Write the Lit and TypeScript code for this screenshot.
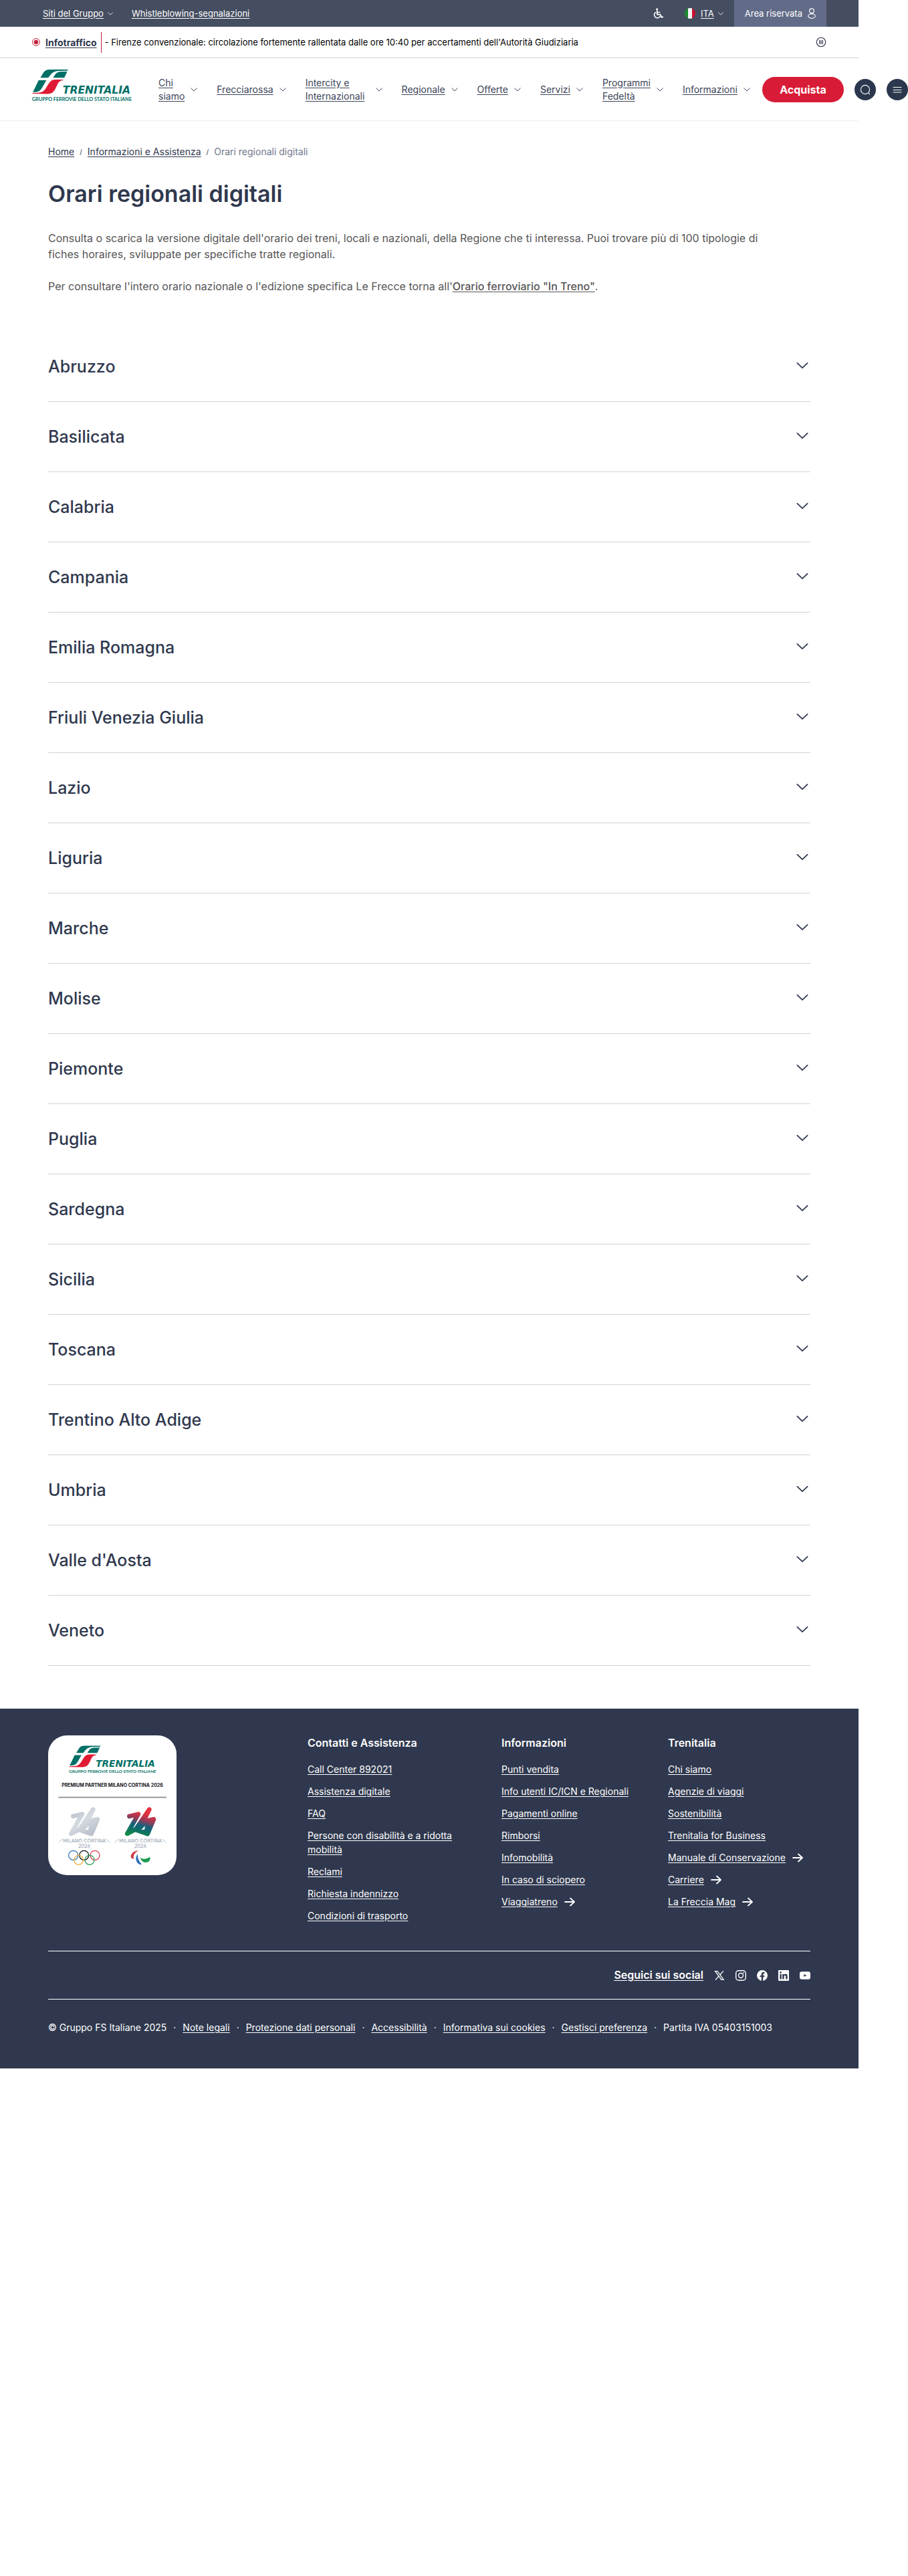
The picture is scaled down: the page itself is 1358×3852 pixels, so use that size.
import { LitElement, html, svg, css, nothing } from "lit";
import { customElement, state } from "lit/decorators.js";

type Item = { text: string; arrow?: boolean };

const NAV: string[] = [
  "Chi siamo",
  "Frecciarossa",
  "Intercity e Internazionali",
  "Regionale",
  "Offerte",
  "Servizi",
  "Programmi Fedeltà",
  "Informazioni",
];

const REGIONS: string[] = [
  "Abruzzo", "Basilicata", "Calabria", "Campania", "Emilia Romagna",
  "Friuli Venezia Giulia", "Lazio", "Liguria", "Marche", "Molise",
  "Piemonte", "Puglia", "Sardegna", "Sicilia", "Toscana",
  "Trentino Alto Adige", "Umbria", "Valle d'Aosta", "Veneto",
];

const COLUMNS: { title: string; items: Item[] }[] = [
  {
    title: "Contatti e Assistenza",
    items: [
      { text: "Call Center 892021" },
      { text: "Assistenza digitale" },
      { text: "FAQ" },
      { text: "Persone con disabilità e a ridotta mobilità" },
      { text: "Reclami" },
      { text: "Richiesta indennizzo" },
      { text: "Condizioni di trasporto" },
    ],
  },
  {
    title: "Informazioni",
    items: [
      { text: "Punti vendita" },
      { text: "Info utenti IC/ICN e Regionali" },
      { text: "Pagamenti online" },
      { text: "Rimborsi" },
      { text: "Infomobilità" },
      { text: "In caso di sciopero" },
      { text: "Viaggiatreno", arrow: true },
    ],
  },
  {
    title: "Trenitalia",
    items: [
      { text: "Chi siamo" },
      { text: "Agenzie di viaggi" },
      { text: "Sostenibilità" },
      { text: "Trenitalia for Business" },
      { text: "Manuale di Conservazione", arrow: true },
      { text: "Carriere", arrow: true },
      { text: "La Freccia Mag", arrow: true },
    ],
  },
];

const LEGAL: string[] = [
  "Note legali",
  "Protezione dati personali",
  "Accessibilità",
  "Informativa sui cookies",
  "Gestisci preferenza",
];

const chevron = (cls: string) => html`
  <svg class=${cls} viewBox="0 0 20 12" aria-hidden="true">
    <path d="M1.5 2 L10 10 L18.5 2" fill="none" stroke="currentColor" stroke-linecap="round" stroke-linejoin="round" />
  </svg>`;

const arrow = html`
  <svg class="arrow" viewBox="0 0 16 14" aria-hidden="true">
    <path d="M1 7 H15 M9 1.5 L15 7 L9 12.5" fill="none" stroke="currentColor" stroke-width="1.8" stroke-linecap="round" stroke-linejoin="round" />
  </svg>`;

/* Brand mark with wordmark, drawn on a 449 x 148 field. */
const brand = () => svg`
  <g transform="translate(-144 -306)">
    <path fill="#006f66" d="M181 346 L194 324 Q203 309 222 309 L306 309 L303 314 L262 315 Q240 317 229 330 L216 346 Z" />
    <path fill="#006f66" d="M238 346 L246 334 Q254 320 270 319 L302 318 L289 346 Z" />
    <path fill="#006f66" d="M173 357 L208 357 L188 392 Q178 410 160 411 L147 411 Z" />
    <path fill="#e01a33" d="M144 418 L146 415 L172 414 Q194 412 204 396 L220 370 Q230 354 249 354 L284 354 L283 357 Q266 358 259 374 L248 397 Q238 419 212 419 Z" />
    <text x="282" y="418" font-family="DejaVu Sans, Liberation Sans, sans-serif" font-size="47" font-weight="bold" font-style="italic" fill="#006f66">TRENITALIA</text>
    <text x="143" y="450" font-family="Lato, Liberation Sans, sans-serif" font-size="22" font-weight="bold" fill="#006f66">GRUPPO FERROVIE DELLO STATO ITALIANE</text>
  </g>`;

const games = (paint: string) => svg`
  <g fill=${paint} stroke=${paint} stroke-width="20" stroke-linecap="round" stroke-linejoin="round">
    <path fill="none" d="M322 63 L363 53 L313 141 L352 120 L412 32 L386 86" />
    <path d="M352 124 L386 86 L432 76 L404 142 Z" />
  </g>
  <path d="M376 124 L392 106 L391 122 Z" fill="#fff" />
  <text x="372" y="180" text-anchor="middle" font-family="DejaVu Sans, Liberation Sans, sans-serif" font-size="22" fill="#8b9aa8">MILANO CORTINA</text>
  <path d="M257 180 L274 165 M470 165 L487 180" stroke="#8b9aa8" stroke-width="2" />
  <text x="372" y="204" text-anchor="middle" font-family="Lato, Liberation Sans, sans-serif" font-size="23" fill="#8b9aa8">2026</text>`;

const partner = html`
  <svg class="partner" viewBox="96 165 576 627" role="img" aria-label="Trenitalia, Premium Partner Milano Cortina 2026">
    <defs>
      <linearGradient id="silver" gradientUnits="userSpaceOnUse" x1="320" y1="20" x2="400" y2="150">
        <stop offset="0" stop-color="#b4bcc7" /><stop offset="0.5" stop-color="#d6dae1" /><stop offset="1" stop-color="#b9c0ca" />
      </linearGradient>
      <linearGradient id="flame" gradientUnits="userSpaceOnUse" x1="385" y1="20" x2="350" y2="150">
        <stop offset="0.2" stop-color="#e2323f" /><stop offset="0.42" stop-color="#9c3a55" /><stop offset="0.62" stop-color="#185f7c" /><stop offset="0.75" stop-color="#0e6a6b" /><stop offset="1" stop-color="#128a45" />
      </linearGradient>
    </defs>
    <g transform="translate(190 209) scale(0.87)">${brand()}</g>
    <text x="384" y="396" text-anchor="middle" font-family="Inter, Liberation Sans, sans-serif" font-size="21" font-weight="700" fill="#16161c">PREMIUM PARTNER MILANO CORTINA 2026</text>
    <path d="M142 443 H627" stroke="#8b8d92" stroke-width="5" />
    <g transform="translate(-114 465)">${games("url(#silver)")}</g>
    <g transform="translate(138 465)">${games("url(#flame)")}</g>
    <g fill="none" stroke-width="4">
      <circle cx="209" cy="703" r="21" stroke="#2b74b8" />
      <circle cx="257" cy="703" r="21" stroke="#111" />
      <circle cx="306" cy="703" r="21" stroke="#d93a4b" />
      <circle cx="233" cy="724" r="21" stroke="#efae3a" />
      <circle cx="282" cy="724" r="21" stroke="#2a9a56" />
    </g>
    <path fill="#cf3540" d="M502 682 Q470 684 467 709 Q468 718 480 719 Q474 696 502 682 Z" />
    <path fill="#2f6fb5" d="M497 697 Q484 716 495 735 Q504 748 516 743 Q498 728 497 697 Z" />
    <path fill="#1f9a52" d="M508 713 Q528 727 552 710 Q558 722 545 733 Q520 742 508 713 Z" />
  </svg>`;

@customElement("app-root")
export class AppRoot extends LitElement {
  @state() private open = -1;

  static styles = css`
    :host {
      display: block;
      font-family: Inter, "Liberation Sans", sans-serif;
      color: #2f384e;
      --gutter: 74px;
    }
    * { box-sizing: border-box; }
    a { color: inherit; text-decoration: underline; text-underline-offset: 2px; }
    button { font: inherit; color: inherit; background: none; border: 0; padding: 0; cursor: pointer; }
    ul { list-style: none; margin: 0; padding: 0; }
    h1, h2, h3, p { margin: 0; }
    svg { display: block; flex: none; }
    .page { margin-right: var(--gutter); }

    .topbar {
      display: flex; align-items: center; justify-content: space-between;
      height: 40px; padding: 0 48px 0 64px;
      background: #454d60; color: #fff; font-size: 13px; line-height: 20px;
    }
    .group { display: flex; align-items: center; }
    .sites { gap: 28px; }
    .drop { display: flex; align-items: center; gap: 6px; }
    .tiny { width: 8px; height: 5px; stroke-width: 2px; }
    .tools { height: 100%; }
    .wheel { width: 16px; height: 16px; margin-right: 32px; }
    .flag { width: 16px; height: 16px; margin-right: 8px; }
    .account {
      display: flex; align-items: center; gap: 8px; height: 100%;
      margin-left: 16px; padding: 0 16px; background: #626b88; color: #fff; text-decoration: none;
    }
    .person { width: 12px; height: 16px; }

    .info {
      display: flex; align-items: center; height: 47px; padding: 0 48px;
      border-bottom: 1px solid #d3d3d3; font-size: 14px;
    }
    .live { width: 12px; height: 12px; margin-right: 8px; }
    .info strong { font-weight: 700; }
    .news {
      display: flex; align-items: center; height: 31px; margin-left: 6px; padding-left: 5px;
      border-left: 1px solid #c01f3c; color: #000; font-size: 13px;
    }
    .pause { margin-left: auto; }
    .pause svg { width: 16px; height: 16px; }

    .header { border-bottom: 1px solid #efefef; }
    .bar {
      display: flex; align-items: center; height: 93px; padding-left: 48px;
      margin-right: calc(-1 * var(--gutter));
    }
    .logo { align-self: flex-start; padding-top: 16px; }
    .logo svg { width: 149px; height: 49px; overflow: visible; }
    .menu {
      display: flex; flex: 1; align-items: center; justify-content: space-between;
      padding: 0 18px 0 40px; font-size: 14px; line-height: 20px; color: #3b4458;
    }
    .entry { display: flex; align-items: center; gap: 9px; }
    .entry a { width: min-content; }
    .entry .pair { width: auto; max-width: 96px; }
    .small { width: 10px; height: 6px; stroke-width: 2px; }
    .buy {
      display: flex; align-items: center; justify-content: center; width: 122px; height: 38px;
      border-radius: 19px; background: #d81b36; color: #fff; font-size: 16px; font-weight: 700;
    }
    .round {
      display: flex; align-items: center; justify-content: center; width: 32px; height: 32px;
      margin-left: 16px; border-radius: 50%; background: #2b374d; color: #fff;
    }
    .round svg { width: 16px; height: 16px; }

    .content { padding: 36px 72px 64px; }
    .crumbs { display: flex; align-items: center; gap: 8px; font-size: 14px; line-height: 20px; }
    .slash { font-size: 10px; }
    .here { color: #6f768c; }
    h1 { margin-top: 31px; font-size: 34px; line-height: 44px; font-weight: 600; }
    .intro { max-width: 1104px; margin-top: 32px; font-size: 16px; line-height: 24px; color: #555; }
    .intro p + p { margin-top: 24px; }
    .intro strong { font-weight: 500; }
    .regions { margin-top: 56px; }
    .region { border-bottom: 1px solid #d3d3d3; }
    .region h2 { font-size: 25px; line-height: 32px; font-weight: 500; }
    .region button {
      display: flex; align-items: center; justify-content: space-between;
      width: 100%; padding: 36px 3px 36px 0; text-align: left;
    }
    .big { width: 18px; height: 11px; margin-bottom: 4px; stroke-width: 2px; }
    .panel { padding-bottom: 24px; font-size: 16px; line-height: 24px; color: #555; }

    .footer { padding: 40px 72px 51px; background: #2f384e; color: #fff; font-size: 14px; line-height: 21px; }
    .top { display: grid; grid-template-columns: 388px 290px 249px 1fr; padding-bottom: 42px; }
    .card { width: 192px; height: 209px; border-radius: 28px; background: #fff; }
    .partner { width: 192px; height: 209px; }
    .col h2 { font-size: 16px; line-height: 22px; font-weight: 600; }
    .col ul { display: grid; gap: 12px; margin-top: 18px; }
    .col li { display: flex; align-items: center; gap: 10px; max-width: 240px; }
    .arrow { width: 16px; height: 14px; }
    .social {
      display: flex; align-items: center; justify-content: flex-end; gap: 16px; height: 73px;
      border-top: 1px solid #fff; border-bottom: 1px solid #fff; font-size: 16px; font-weight: 600;
    }
    .social svg { width: 16px; height: 16px; }
    .legal { display: flex; flex-wrap: wrap; gap: 10px; margin-top: 31px; }
  `;

  private toggle(i: number) {
    this.open = this.open === i ? -1 : i;
  }

  render() {
    return html`
      <div class="page">
        <div class="topbar">
          <div class="group sites">
            <a class="drop" href="#">Siti del Gruppo ${chevron("tiny")}</a>
            <a href="#">Whistleblowing-segnalazioni</a>
          </div>
          <div class="group tools">
            <a href="#" aria-label="Accessibilità">
              <svg class="wheel" viewBox="0 0 16 16" fill="none" stroke="#fff" stroke-linecap="round" stroke-linejoin="round">
                <circle cx="6.6" cy="1.7" r="1.5" fill="#fff" stroke="none" />
                <path d="M6.8 4 V9.6 H11.4 L13.6 14 L15.2 13.3" stroke-width="1.9" />
                <path d="M7 6.4 H11" stroke-width="1.4" />
                <path d="M4.2 6.6 A4.6 4.6 0 1 0 11 12.6" stroke-width="1.6" />
              </svg>
            </a>
            <svg class="flag" viewBox="0 0 16 16" aria-hidden="true">
              <clipPath id="disc"><circle cx="8" cy="8" r="8" /></clipPath>
              <g clip-path="url(#disc)">
                <path fill="#1b8a2c" d="M0 0h5v16H0z" /><path fill="#f4f4f4" d="M5 0h6v16H5z" /><path fill="#c8102e" d="M11 0h5v16h-5z" />
              </g>
            </svg>
            <a class="drop" href="#">ITA ${chevron("tiny")}</a>
            <a class="account" href="#">Area riservata
              <svg class="person" viewBox="0 0 12 16" fill="none" stroke="#fff" stroke-width="1.2" aria-hidden="true">
                <circle cx="6" cy="4.2" r="3.4" /><ellipse cx="6" cy="12" rx="5.3" ry="3.3" />
              </svg>
            </a>
          </div>
        </div>

        <div class="info">
          <svg class="live" viewBox="0 0 12 12" aria-hidden="true">
            <circle cx="6" cy="6" r="5.4" fill="none" stroke="#c01f3c" /><circle cx="6" cy="6" r="3.2" fill="#c01f3c" />
          </svg>
          <a href="#"><strong>Infotraffico</strong></a>
          <span class="news">- Firenze convenzionale: circolazione fortemente rallentata dalle ore 10:40 per accertamenti dell'Autorità Giudiziaria</span>
          <button class="pause" aria-label="Pausa">
            <svg viewBox="0 0 16 16" fill="none" stroke="#2f384e">
              <circle cx="8" cy="8" r="6.7" stroke-width="1.1" /><rect x="5.5" y="5.4" width="1.8" height="5.2" rx="0.5" stroke-width="0.9" /><rect x="8.8" y="5.4" width="1.8" height="5.2" rx="0.5" stroke-width="0.9" />
            </svg>
          </button>
        </div>

        <header class="header">
          <div class="bar">
            <a class="logo" href="#" aria-label="Trenitalia">
              <svg viewBox="0 0 449 148">${brand()}</svg>
            </a>
            <nav class="menu">
              ${NAV.map((n) => html`<div class="entry"><a class=${n.startsWith("Intercity") ? "pair" : ""} href="#">${n}</a>${chevron("small")}</div>`)}
            </nav>
            <button class="buy">Acquista</button>
            <button class="round" aria-label="Cerca">
              <svg viewBox="0 0 16 16" fill="none" stroke="currentColor" stroke-width="1.1" stroke-linecap="round">
                <circle cx="8" cy="8" r="6.6" /><path d="M13 13 L14.6 14.8" />
              </svg>
            </button>
            <button class="round" aria-label="Menu">
              <svg viewBox="0 0 16 16" fill="none" stroke="currentColor" stroke-width="1.1" stroke-linecap="round">
                <path d="M2 4.5 H14 M2 8.5 H14 M2 12 H14" />
              </svg>
            </button>
          </div>
        </header>

        <main class="content">
          <nav class="crumbs" aria-label="Percorso">
            <a href="#">Home</a><span class="slash">/</span>
            <a href="#">Informazioni e Assistenza</a><span class="slash">/</span>
            <span class="here">Orari regionali digitali</span>
          </nav>
          <h1>Orari regionali digitali</h1>
          <div class="intro">
            <p>Consulta o scarica la versione digitale dell'orario dei treni, locali e nazionali, della Regione che ti interessa. Puoi trovare più di 100 tipologie di fiches horaires, sviluppate per specifiche tratte regionali.</p>
            <p>Per consultare l'intero orario nazionale o l'edizione specifica Le Frecce torna all'<a href="#"><strong>Orario ferroviario "In Treno"</strong></a>.</p>
          </div>
          <div class="regions">
            ${REGIONS.map((r, i) => html`
              <section class="region">
                <h2><button aria-expanded=${this.open === i} @click=${() => this.toggle(i)}>${r}${chevron("big")}</button></h2>
                ${this.open === i ? html`<div class="panel">${r}</div>` : nothing}
              </section>`)}
          </div>
        </main>

        <footer class="footer">
          <div class="top">
            <div class="card">${partner}</div>
            ${COLUMNS.map((c) => html`
              <div class="col">
                <h2>${c.title}</h2>
                <ul>${c.items.map((it) => html`<li><a href="#">${it.text}</a>${it.arrow ? arrow : nothing}</li>`)}</ul>
              </div>`)}
          </div>
          <div class="social">
            <a href="#">Seguici sui social</a>
            <a href="#" aria-label="X"><svg viewBox="0 0 16 16" fill="none" stroke="#fff">
              <path d="M1.6 1.7 H4.9 L14.2 14.3 H10.9 Z" stroke-width="1.3" /><path d="M13.8 1.4 L8.9 6.9 M6.9 9.1 L2 14.6" stroke-width="1.4" />
            </svg></a>
            <a href="#" aria-label="Instagram"><svg viewBox="0 0 16 16" fill="none" stroke="#fff" stroke-width="1.4">
              <rect x="0.7" y="0.7" width="14.6" height="14.6" rx="4" /><circle cx="8" cy="8" r="3.5" /><circle cx="12.2" cy="3.9" r="0.9" fill="#fff" stroke="none" />
            </svg></a>
            <a href="#" aria-label="Facebook"><svg viewBox="0 0 16 16" fill="#fff">
              <path d="M16 8a8 8 0 1 0-9.25 7.9v-5.6H4.7V8h2.05V6.2c0-2 1.2-3.1 3-3.1.9 0 1.8.16 1.8.16v2h-1c-1 0-1.3.6-1.3 1.25V8h2.2l-.35 2.3H9.25v5.6A8 8 0 0 0 16 8z" />
            </svg></a>
            <a href="#" aria-label="LinkedIn"><svg viewBox="0 0 16 16">
              <rect width="16" height="16" rx="1.2" fill="#fff" />
              <path fill="#2f384e" d="M2.4 6h2.4v7.6H2.4z M6.2 6h2.3v1.1c.4-.7 1.2-1.3 2.4-1.3 2.2 0 2.8 1.4 2.8 3.5v4.3h-2.4V9.8c0-1-.1-1.9-1.3-1.9s-1.4.9-1.4 1.9v3.8H6.2z" />
              <circle cx="3.6" cy="3.6" r="1.4" fill="#2f384e" />
            </svg></a>
            <a href="#" aria-label="YouTube"><svg viewBox="0 0 16 16">
              <rect y="2.2" width="16" height="11.6" rx="3" fill="#fff" /><path fill="#2f384e" d="M6.4 6 L10.4 8 L6.4 10 Z" />
            </svg></a>
          </div>
          <div class="legal">
            <span>© Gruppo FS Italiane 2025</span>
            ${LEGAL.map((l) => html`<span>·</span><a href="#">${l}</a>`)}
            <span>·</span><span>Partita IVA 05403151003</span>
          </div>
        </footer>
      </div>
    `;
  }
}
